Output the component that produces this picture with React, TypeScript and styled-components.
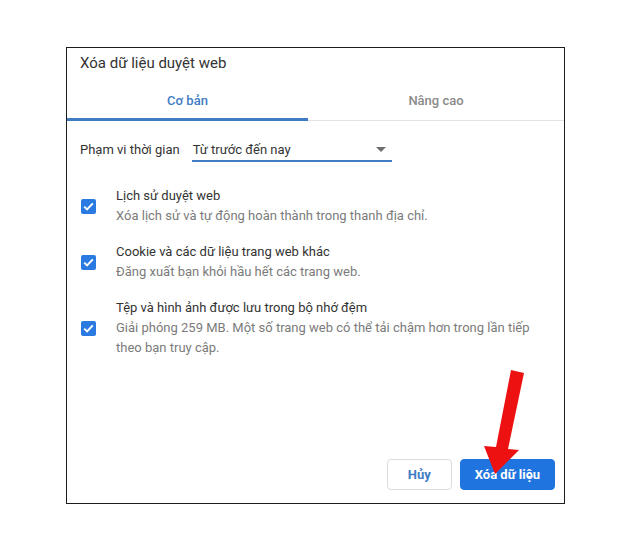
import styled, { createGlobalStyle } from "styled-components";

const GlobalStyle = createGlobalStyle`
  body {
    margin: 0;
    background: #ffffff;
    font-family: Roboto, "Liberation Sans", Arial, sans-serif;
  }
`;

const Page = styled.div`
  position: relative;
  width: 640px;
  height: 540px;
  padding: 47px 0 0 66px;
  box-sizing: border-box;
`;

const Dialog = styled.div`
  width: 499px;
  height: 457px;
  box-sizing: border-box;
  border: 1px solid #1c1c1c;
  background: #fff;
  display: flex;
  flex-direction: column;
`;

const Title = styled.div`
  padding: 5px 13px 0;
  height: 32px;
  box-sizing: border-box;
  font-size: 15px;
  line-height: 20px;
  color: #333;
`;

const TabBar = styled.div`
  display: grid;
  grid-template-columns: 241px 1fr;
  border-bottom: 1px solid #e3e3e3;
`;

const Tab = styled.div<{ $active?: boolean }>`
  height: 41px;
  margin-bottom: -1px;
  box-sizing: border-box;
  padding-top: 3px;
  display: flex;
  align-items: center;
  justify-content: center;
  font-size: 13px;
  font-weight: 500;
  color: ${(p) => (p.$active ? "#3f7cc4" : "#8a8a8a")};
  border-bottom: 3px solid ${(p) => (p.$active ? "#3f7cc4" : "transparent")};
`;

const RangeRow = styled.div`
  display: flex;
  align-items: flex-end;
  padding: 19px 13px 0;
  gap: 12px;
`;

const Label = styled.span`
  font-size: 13px;
  line-height: 20px;
  color: #333;
  padding-bottom: 2px;
`;

const Select = styled.div`
  width: 200px;
  height: 22px;
  box-sizing: border-box;
  border-bottom: 2px solid #3f7cc4;
  display: flex;
  align-items: center;
  justify-content: space-between;
  padding: 0 6px 1px 1px;
  font-size: 13px;
  color: #333;
`;

const Caret = styled.span`
  width: 0;
  height: 0;
  border-left: 5px solid transparent;
  border-right: 5px solid transparent;
  border-top: 5px solid #6e6e6e;
`;

const List = styled.div`
  display: flex;
  flex-direction: column;
  gap: 16px;
  padding: 24px 0 0 14px;
`;

const Item = styled.div`
  display: flex;
  align-items: center;
  gap: 20px;
`;

const Box = styled.span`
  width: 15px;
  height: 15px;
  flex: none;
  border-radius: 2px;
  background: #2a7ae2;
  display: flex;
  align-items: center;
  justify-content: center;
`;

const Texts = styled.div`
  max-width: 425px;
  font-size: 13px;
  line-height: 20px;
`;

const ItemTitle = styled.div`
  color: #333;
`;

const ItemDesc = styled.div`
  color: #7b7b7b;
`;

const Footer = styled.div`
  margin-top: auto;
  display: flex;
  justify-content: flex-end;
  gap: 8px;
  padding: 0 9px 13px 0;
`;

const Button = styled.button<{ $primary?: boolean }>`
  height: 31px;
  padding: 0 ${(p) => (p.$primary ? "14px" : "20px")};
  border-radius: 4px;
  font-family: inherit;
  font-size: 13px;
  font-weight: 700;
  border: 1px solid ${(p) => (p.$primary ? "#1f74e0" : "#dadce0")};
  background: ${(p) => (p.$primary ? "#1f74e0" : "#fff")};
  color: ${(p) => (p.$primary ? "#fff" : "#3f7cc4")};
`;

const Arrow = styled.svg`
  position: absolute;
  left: 480px;
  top: 365px;
`;

const Check = () => (
  <svg width="11" height="9" viewBox="0 0 11 9">
    <path d="M1.2 4.6 L4.1 7.4 L9.8 1.4" fill="none" stroke="#fff" strokeWidth="2" />
  </svg>
);

const items = [
  {
    title: "Lịch sử duyệt web",
    desc: "Xóa lịch sử và tự động hoàn thành trong thanh địa chỉ.",
  },
  {
    title: "Cookie và các dữ liệu trang web khác",
    desc: "Đăng xuất bạn khỏi hầu hết các trang web.",
  },
  {
    title: "Tệp và hình ảnh được lưu trong bộ nhớ đệm",
    desc: "Giải phóng 259 MB. Một số trang web có thể tải chậm hơn trong lần tiếp theo bạn truy cập.",
  },
];

export default function App() {
  return (
    <Page>
      <GlobalStyle />
      <Dialog>
        <Title>Xóa dữ liệu duyệt web</Title>
        <TabBar>
          <Tab $active>Cơ bản</Tab>
          <Tab>Nâng cao</Tab>
        </TabBar>
        <RangeRow>
          <Label>Phạm vi thời gian</Label>
          <Select>
            <span>Từ trước đến nay</span>
            <Caret />
          </Select>
        </RangeRow>
        <List>
          {items.map((it) => (
            <Item key={it.title}>
              <Box>
                <Check />
              </Box>
              <Texts>
                <ItemTitle>{it.title}</ItemTitle>
                <ItemDesc>{it.desc}</ItemDesc>
              </Texts>
            </Item>
          ))}
        </List>
        <Footer>
          <Button>Hủy</Button>
          <Button $primary>Xóa dữ liệu</Button>
        </Footer>
      </Dialog>
      <Arrow width="50" height="115" viewBox="0 0 50 115">
        <polygon
          points="31,5 44,8 28,84 39,85 15,109 4,81 16,82"
          fill="#ee1111"
        />
      </Arrow>
    </Page>
  );
}
